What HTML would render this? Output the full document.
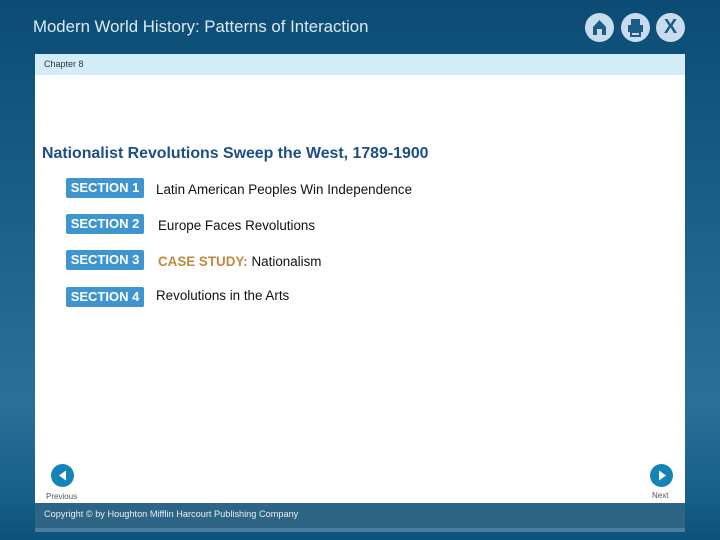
<!DOCTYPE html>
<html><head><meta charset="utf-8"><style>
body{margin:0;width:720px;height:540px;overflow:hidden;font-family:"Liberation Sans",sans-serif;
background:linear-gradient(180deg,#0c4c74 0%,#1a6089 40%,#2a7099 75%,#155f89 92%,#0c5379 100%);position:relative}
.a{position:absolute}
.title{left:33px;top:17px;color:#dbe9f3;font-size:16.8px}
.ic{width:29px;height:29px;border-radius:50%;background:#c9dbef;top:13px}
.band{left:35px;top:54px;width:650px;height:21px;background:#d2edf7}
.white{left:35px;top:75px;width:650px;height:428px;background:#fff}
.foot{left:35px;top:503px;width:650px;height:25px;background:#2e6584}
.stripe{left:35px;top:528px;width:650px;height:4px;background:#4d7f9d}
.sec{left:66px;width:78px;height:20px;background:#3f95cd;color:#fff;font-weight:bold;font-size:13px;line-height:20px;text-align:center;border-radius:2px}
.t{font-size:13.4px;color:#111}
.nav{width:23px;height:23px;border-radius:50%;background:#1383b8}
</style></head><body>
<div class="a title">Modern World History: Patterns of Interaction</div>
<div class="a ic" style="left:585px"><svg width="29" height="29"><path d="M8 14 L14.5 7 L21 14 L21 22 L17 22 L17 16 L12 16 L12 22 L8 22Z" fill="#1b5d86"/></svg></div>
<div class="a ic" style="left:621px"><svg width="29" height="29"><rect x="10" y="6" width="9" height="6" fill="#1b5d86"/><rect x="7" y="12" width="15" height="7" fill="#1b5d86"/><rect x="10" y="19" width="9" height="4" fill="none" stroke="#1b5d86" stroke-width="2"/></svg></div>
<div class="a ic" style="left:656px;color:#1b5d86;font-weight:bold;font-size:20px;text-align:center;line-height:29px">X</div>
<div class="a band"></div>
<div class="a" style="left:44px;top:59px;font-size:9px;color:#333">Chapter 8</div>
<div class="a white"></div>
<div class="a" style="left:42px;top:145px;font-size:15.9px;font-weight:bold;color:#1c4f86">Nationalist Revolutions Sweep the West, 1789-1900</div>
<div class="a sec" style="top:178px">SECTION 1</div>
<div class="a t" style="left:156px;top:182px">Latin American Peoples Win Independence</div>
<div class="a sec" style="top:214px">SECTION 2</div>
<div class="a t" style="left:158px;top:218px">Europe Faces Revolutions</div>
<div class="a sec" style="top:250px">SECTION 3</div>
<div class="a t" style="left:158px;top:254px"><b style="color:#c0893e">CASE STUDY:</b> Nationalism</div>
<div class="a sec" style="top:287px">SECTION 4</div>
<div class="a t" style="left:156px;top:288px">Revolutions in the Arts</div>
<div class="a nav" style="left:51px;top:464px"><svg width="23" height="23"><path d="M8 11.5 L15 6.5 L15 16.5Z" fill="#fff"/></svg></div>
<div class="a" style="left:46px;top:492px;font-size:8px;color:#555">Previous</div>
<div class="a nav" style="left:650px;top:464px"><svg width="23" height="23"><path d="M16 11.5 L9 6.5 L9 16.5Z" fill="#fff"/></svg></div>
<div class="a" style="left:652px;top:491px;font-size:8px;color:#555">Next</div>
<div class="a foot"></div>
<div class="a stripe"></div>
<div class="a" style="left:44px;top:509px;font-size:9.2px;color:#e6eef4">Copyright © by Houghton Mifflin Harcourt Publishing Company</div>
</body></html>
